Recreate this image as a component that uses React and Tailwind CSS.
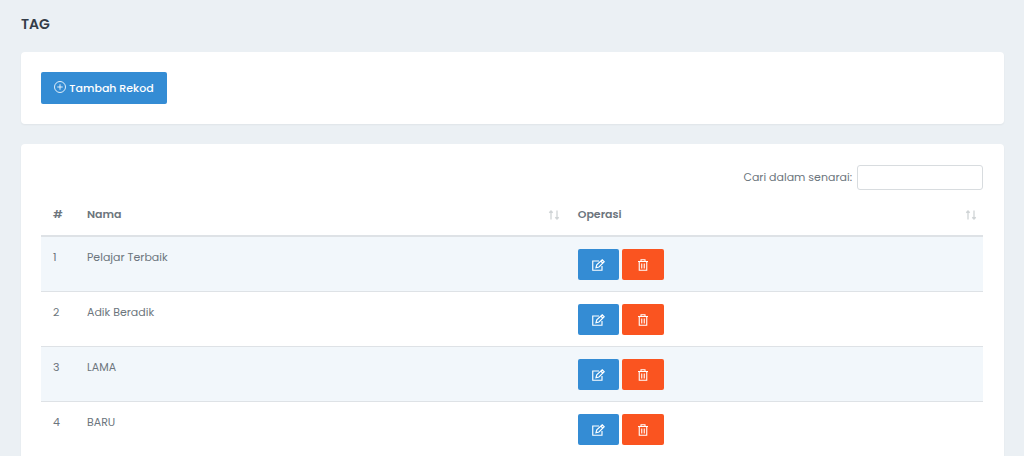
import React from "react";

const rows = ["Pelajar Terbaik", "Adik Beradik", "LAMA", "BARU"];

function PlusCircleIcon() {
  return (
    <svg className="size-3 -translate-y-px" viewBox="0 0 24 24" fill="none" stroke="currentColor" strokeWidth="1.7" aria-hidden="true">
      <circle cx="12" cy="12" r="11" />
      <path d="M12 6.5v11M6.5 12h11" />
    </svg>
  );
}

function EditIcon() {
  return (
    <svg className="h-3 w-[13px]" viewBox="0 0 26 24" fill="none" stroke="currentColor" strokeWidth="2.3" aria-hidden="true">
      <path d="M14 4H1.5v18.5H20V14" />
      <path d="M8 17.5l1.5-6L20.5 1.5l4 4L14 16 8 17.5z" />
      <path d="M17.5 4l4 4" />
    </svg>
  );
}

function TrashIcon() {
  return (
    <svg className="h-3 w-[10px]" viewBox="0 0 20 24" fill="none" stroke="currentColor" strokeWidth="2.2" aria-hidden="true">
      <path d="M0 5h20M6 5V1.5h8V5M2.5 5v17.5h15V5M7.5 9v10M12.5 9v10" />
    </svg>
  );
}

function SortIcon() {
  return (
    <svg className="h-[10px] w-3 text-[#d0d4d6]" viewBox="0 0 24 20" fill="none" stroke="currentColor" strokeWidth="2.6" aria-hidden="true">
      <path d="M6 19V2M2.5 5.5L6 2l3.5 3.5M18 1v17M14.5 14.5L18 18l3.5-3.5" />
    </svg>
  );
}

function SortableHeading({ children }) {
  return (
    <th scope="col" className="pr-1.5 pl-3 text-left font-semibold">
      <div className="flex items-center justify-between">
        {children}
        <button type="button" aria-label={`Susun ${children}`}>
          <SortIcon />
        </button>
      </div>
    </th>
  );
}

export default function App() {
  return (
    <main className="min-h-screen bg-[#ebf0f4] pt-[14px] pr-5 pl-[21px] font-['Poppins','Inter',sans-serif] text-[11px] text-[#6c757d]">
      <h1 className="mb-[18px] text-sm leading-5 font-semibold text-[#343d48]">TAG</h1>

      <section className="mb-5 rounded-sm bg-white p-5 pr-[21px] shadow-xs">
        <button type="button" className="flex h-8 w-[126px] items-center justify-center gap-[3px] rounded-xs bg-[#348cd4] font-medium text-white">
          <PlusCircleIcon />
          Tambah Rekod
        </button>
      </section>

      <section className="rounded-sm bg-white p-5 pt-[21px] pr-[21px] shadow-xs">
        <div className="flex items-center justify-end gap-[5px]">
          <label htmlFor="search">Cari dalam senarai:</label>
          <input id="search" type="search" className="h-[25px] w-[126px] rounded-[3px] border border-[#d8dcdf] bg-white px-2 outline-none focus:border-[#348cd4]" />
        </div>

        <table className="mt-1 w-full table-fixed border-collapse">
          <colgroup>
            <col className="w-[34px]" />
            <col className="w-[52.1%]" />
            <col />
          </colgroup>
          <thead>
            <tr className="h-[42px] border-b-2 border-[#dee2e6]">
              <th scope="col" className="px-3 text-left font-semibold">#</th>
              <SortableHeading>Nama</SortableHeading>
              <SortableHeading>Operasi</SortableHeading>
            </tr>
          </thead>
          <tbody>
            {rows.map((name, index) => (
              <tr key={name} className="border-b border-[#dee2e6] align-top odd:bg-[#f2f7fb]">
                <td className="px-3 pt-3 leading-4">{index + 1}</td>
                <td className="px-3 pt-3 leading-4">{name}</td>
                <td className="px-3 pt-3 pb-[11px]">
                  <div className="flex gap-[3px]">
                    <button type="button" aria-label={`Sunting ${name}`} className="flex h-[31px] w-[41px] items-center justify-center rounded-xs bg-[#348cd4] text-white">
                      <EditIcon />
                    </button>
                    <button type="button" aria-label={`Padam ${name}`} className="flex h-[31px] w-[42px] items-center justify-center rounded-xs bg-[#fa5420] text-white">
                      <TrashIcon />
                    </button>
                  </div>
                </td>
              </tr>
            ))}
          </tbody>
        </table>
      </section>
    </main>
  );
}
